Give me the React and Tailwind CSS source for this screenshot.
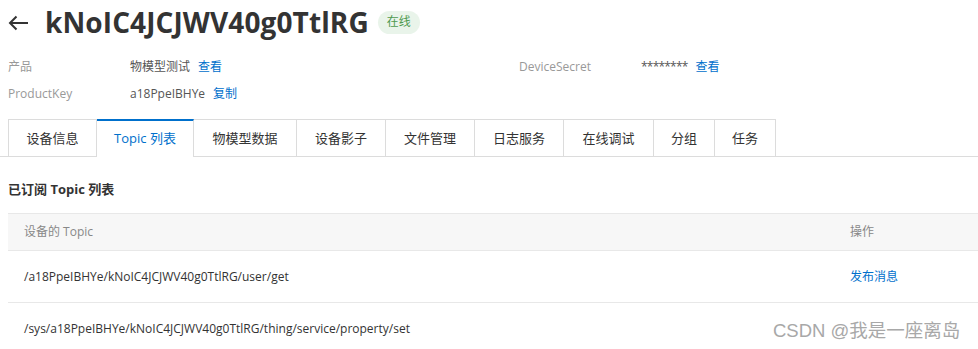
const tabs = ["设备信息", "Topic 列表", "物模型数据", "设备影子", "文件管理", "日志服务", "在线调试", "分组", "任务"];
const tabWidths = ["w-[89px]", "w-[97px]", "w-[103px]", "w-[89px]", "w-[89px]", "w-[89px]", "w-[90px]", "w-[61px]", "w-[61px]"];

const topics = [
  { path: "/a18PpeIBHYe/kNoIC4JCJWV40g0TtlRG/user/get", action: "发布消息" },
  { path: "/sys/a18PpeIBHYe/kNoIC4JCJWV40g0TtlRG/thing/service/property/set", action: "" },
];

export default function App() {
  return (
    <div
      className="w-[978px] h-[349px] overflow-hidden bg-white text-[#333] relative"
      style={{ fontFamily: '"Open Sans", "Noto Sans CJK SC", sans-serif' }}
    >
      {/* HEADER */}
      <div className="flex items-center h-[44px] pl-[8px]">
        <svg width="21" height="16" viewBox="0 0 21 16" className="mr-[16px] mt-[2px]">
          <path d="M20 8H2M8.5 1.5L2 8l6.5 6.5" fill="none" stroke="#333" strokeWidth="2" />
        </svg>
        <h1 className="text-[28px] font-bold text-[#333] tracking-[0.1px] leading-none">kNoIC4JCJWV40g0TtlRG</h1>
        <span className="ml-[9px] h-[23px] px-[9px] rounded-full bg-[#e9f4ea] text-[#4f9a4f] text-[12px] flex items-center">
          在线
        </span>
      </div>

      {/* INFO */}
      <div className="text-[12px] mt-[11px]">
        <div className="flex items-center h-[24px]">
          <span className="w-[130px] pl-[8px] text-[#999]">产品</span>
          <span className="text-[#555]">物模型测试</span>
          <span className="ml-[8px] text-[#0070cc]">查看</span>
          <span className="ml-[297px] w-[122px] text-[#999]">DeviceSecret</span>
          <span className="text-[#555] tracking-[-0.8px]">********</span>
          <span className="ml-[8px] text-[#0070cc]">查看</span>
        </div>
        <div className="flex items-center h-[24px] mt-[3px]">
          <span className="w-[130px] pl-[8px] text-[#999]">ProductKey</span>
          <span className="text-[#555]">a18PpeIBHYe</span>
          <span className="ml-[8px] text-[#0070cc]">复制</span>
        </div>
      </div>

      {/* TABS */}
      <div className="flex mt-[13px] pl-[8px] border-b border-[#dcdcdc] h-[38px]">
        {tabs.map((t, i) => (
          <div
            key={t}
            className={`${tabWidths[i]} h-[38px] flex items-center justify-center text-[13px] border-t border-r border-[#dcdcdc] ${
              i === 0 ? "border-l" : ""
            } ${i === 1 ? "border-t-2 border-t-[#0070cc] bg-white text-[#0070cc] h-[38px] mb-[-1px]" : "text-[#333]"}`}
          >
            {t}
          </div>
        ))}
      </div>

      {/* SECTION */}
      <h2 className="pl-[8px] mt-[22px] text-[13px] font-bold text-[#333] leading-[20px]">已订阅 Topic 列表</h2>

      <div className="ml-[8px] mt-[14px] text-[12px]">
        <div className="flex items-center h-[38px] bg-[#f7f7f7] border-t border-b border-[#e8e8e8] text-[#888]">
          <span className="pl-[16px] flex-1">设备的 Topic</span>
          <span className="w-[128px]">操作</span>
        </div>
        {topics.map((r) => (
          <div key={r.path} className="flex items-center h-[52px] border-b border-[#e8e8e8] text-[#333]">
            <span className="pl-[16px] flex-1">{r.path}</span>
            <span className="w-[128px] text-[#0070cc]">{r.action}</span>
          </div>
        ))}
      </div>

      {/* WATERMARK */}
      <div
        className="absolute left-[773px] top-[317px] text-[18.5px] text-[#a8a8a8]"
        style={{ fontFamily: '"Liberation Sans", "Noto Sans CJK SC", sans-serif' }}
      >
        CSDN @我是一座离岛
      </div>
    </div>
  );
}
